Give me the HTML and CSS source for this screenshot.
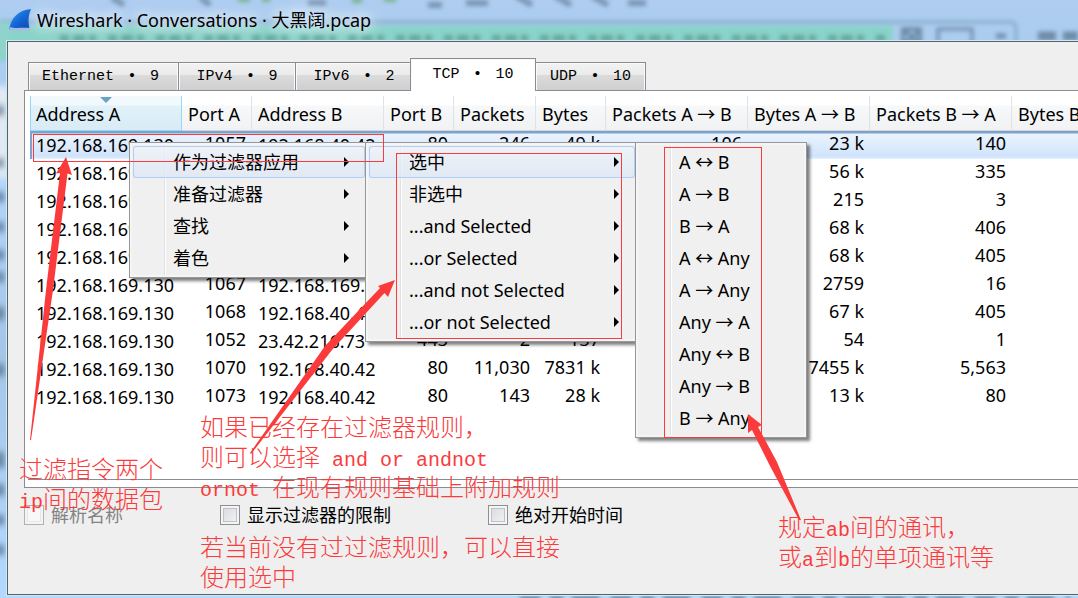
FILE: index.html
```html
<!DOCTYPE html>
<html lang="zh-CN">
<head>
<meta charset="utf-8">
<title>Wireshark · Conversations · 大黑阔.pcap</title>
<link rel="stylesheet" href="styles.css">
</head>
<body>
<svg class="backdrop" aria-hidden="true" preserveAspectRatio="none">
  <defs>
    <filter id="soft" filterUnits="userSpaceOnUse" x="-20" y="-20" width="1140" height="660"><feGaussianBlur stdDeviation="3"/></filter>
    <filter id="edge" filterUnits="userSpaceOnUse" x="-20" y="-20" width="1140" height="660"><feGaussianBlur stdDeviation="2"/></filter>
  </defs>
  <rect x="-10" y="25" width="903" height="36" fill="#8ad3ca" filter="url(#edge)"/>
  <path d="M0 22H1012Q1016 23 1016 29V44" fill="none" stroke="#86abc9" stroke-width="3" filter="url(#edge)"/>
  <g filter="url(#edge)" fill="none" stroke="#6f8ba8" stroke-width="4">
    <rect x="903" y="29" width="17" height="20"/><path d="M905 31L919 44M919 31L905 44"/>
    <rect x="938" y="29" width="34" height="24" stroke-width="3"/>
    <path d="M996 36H1006" stroke-width="5"/>
    <path d="M1038 36H1056M1063 36H1078" stroke-width="9"/>
  </g>
  <g filter="url(#edge)" stroke="#4f8d85" stroke-width="6" stroke-dasharray="9 4 12 4 7 12" fill="none" opacity=".65">
    <path d="M60 38H885"/>
  </g>
  <g filter="url(#edge)" fill="none" stroke="#586f8b" stroke-width="6" opacity=".6">
    <path d="M112 -2L124 5M200 -3L210 5M516 -4L532 5M555 -4L571 5M592 -4L608 5M466 3H488M628 3H646M308 3H326M428 5H442" />
    <path d="M238 -1H250M262 -1H270M352 0H362M384 -1H396" stroke="#5aa552"/>
  </g>
  <g filter="url(#soft)">
    <rect x="-8" y="22" width="18" height="32" fill="#8fd4ca"/>
    <rect x="-8" y="86" width="18" height="92" fill="#e1eaf2"/>
    <path d="M0 105V116M0 158V168M0 192V202M0 222V232M0 250V260M0 272V282M0 307V320M0 364V376M0 452V468M0 484V496M0 515V525M0 545V555" stroke="#607b98" stroke-width="8"/>
  </g>
  <path d="M520 599H1070" stroke="#426487" stroke-width="4" stroke-dasharray="20 10 13 9 27 12" filter="url(#edge)"/>
</svg>

<header class="titlebar">
  <svg class="fin" viewBox="0 0 24 24" aria-hidden="true">
    <defs><linearGradient id="finfill" x1="0" y1="0" x2="1" y2="1"><stop offset="0" stop-color="#3ea0f2"/><stop offset=".5" stop-color="#1268d6"/><stop offset="1" stop-color="#0a3fa8"/></linearGradient></defs>
    <path d="M1 22C3 10 10 2 23 1C20 8 20 15 22 22Z" fill="url(#finfill)"/>
    <path d="M1 22L2 19C8 21 15 19 22 20V22.500Z" fill="#a9b9e6"/>
  </svg>
  <h1 class="title">Wireshark · Conversations · 大黑阔.pcap</h1>
</header>

<main class="client">
  <nav class="tabs" role="tablist">
    <button class="tab tab-wide" role="tab"><span>Ethernet</span><span class="dot">•</span><span>9</span></button>
    <button class="tab" role="tab"><span>IPv4</span><span class="dot">•</span><span>9</span></button>
    <button class="tab" role="tab"><span>IPv6</span><span class="dot">•</span><span>2</span></button>
    <button class="tab tab-active" role="tab" aria-selected="true"><span>TCP</span><span class="dot">•</span><span>10</span></button>
    <button class="tab tab-last" role="tab"><span>UDP</span><span class="dot">•</span><span>10</span></button>
  </nav>

  <section class="pane">
    <div class="grid-view">
      <table class="conversations">
        <colgroup><col class="c-addr-a"><col class="c-port"><col class="c-addr-b"><col class="c-port"><col class="c-packets"><col class="c-port"><col class="c-dir"><col class="c-bytes"><col class="c-dir"><col class="c-bytes"></colgroup>
        <thead>
          <tr>
            <th class="sorted">Address A<svg class="sort-mark" viewBox="0 0 12 6" aria-hidden="true"><path d="M0 0H12L6 6Z" fill="#6ba3c4"/></svg></th>
            <th>Port A</th><th>Address B</th><th>Port B</th><th>Packets</th><th>Bytes</th><th>Packets A → B</th><th>Bytes A → B</th><th>Packets B → A</th><th>Bytes B → A</th>
          </tr>
        </thead>
        <tbody>
          <tr class="selected"><td class="addr">192.168.169.130</td><td>1057</td><td class="addr">192.168.40.42</td><td>80</td><td>246</td><td>49 k</td><td>106</td><td>23 k</td><td>140</td><td></td></tr>
          <tr><td class="addr">192.168.169.130</td><td></td><td class="addr"></td><td></td><td></td><td></td><td></td><td>56 k</td><td>335</td><td></td></tr>
          <tr><td class="addr">192.168.169.130</td><td></td><td class="addr"></td><td></td><td></td><td></td><td></td><td>215</td><td>3</td><td></td></tr>
          <tr><td class="addr">192.168.169.130</td><td></td><td class="addr"></td><td></td><td></td><td></td><td></td><td>68 k</td><td>406</td><td></td></tr>
          <tr><td class="addr">192.168.169.130</td><td></td><td class="addr"></td><td></td><td></td><td></td><td></td><td>68 k</td><td>405</td><td></td></tr>
          <tr><td class="addr">192.168.169.130</td><td>1067</td><td class="addr">192.168.169.</td><td></td><td></td><td></td><td></td><td>2759</td><td>16</td><td></td></tr>
          <tr><td class="addr">192.168.169.130</td><td>1068</td><td class="addr">192.168.40.42</td><td></td><td></td><td></td><td></td><td>67 k</td><td>405</td><td></td></tr>
          <tr><td class="addr">192.168.169.130</td><td>1052</td><td class="addr">23.42.216.73</td><td>443</td><td>2</td><td>137</td><td></td><td>54</td><td>1</td><td></td></tr>
          <tr><td class="addr">192.168.169.130</td><td>1070</td><td class="addr">192.168.40.42</td><td>80</td><td>11,030</td><td>7831 k</td><td></td><td>7455 k</td><td>5,563</td><td></td></tr>
          <tr><td class="addr">192.168.169.130</td><td>1073</td><td class="addr">192.168.40.42</td><td>80</td><td>143</td><td>28 k</td><td></td><td>13 k</td><td>80</td><td></td></tr>
        </tbody>
      </table>
    </div>
  </section>

  <form class="options">
    <label class="option option-off"><input type="checkbox" disabled>解析名称</label>
    <label class="option"><input type="checkbox">显示过滤器的限制</label>
    <label class="option"><input type="checkbox">绝对开始时间</label>
  </form>
</main>

<div class="menu menu-context" role="menu">
  <button class="item item-on" role="menuitem">作为过滤器应用<i class="more"></i></button>
  <button class="item" role="menuitem">准备过滤器<i class="more"></i></button>
  <button class="item" role="menuitem">查找<i class="more"></i></button>
  <button class="item" role="menuitem">着色<i class="more"></i></button>
</div>
<div class="menu menu-apply" role="menu">
  <button class="item item-on" role="menuitem">选中<i class="more"></i></button>
  <button class="item" role="menuitem">非选中<i class="more"></i></button>
  <button class="item" role="menuitem">...and Selected<i class="more"></i></button>
  <button class="item" role="menuitem">...or Selected<i class="more"></i></button>
  <button class="item" role="menuitem">...and not Selected<i class="more"></i></button>
  <button class="item" role="menuitem">...or not Selected<i class="more"></i></button>
</div>
<div class="menu menu-direction" role="menu">
  <button class="item" role="menuitem">A ↔ B</button>
  <button class="item" role="menuitem">A → B</button>
  <button class="item" role="menuitem">B → A</button>
  <button class="item" role="menuitem">A ↔ Any</button>
  <button class="item" role="menuitem">A → Any</button>
  <button class="item" role="menuitem">Any → A</button>
  <button class="item" role="menuitem">Any ↔ B</button>
  <button class="item" role="menuitem">Any → B</button>
  <button class="item" role="menuitem">B → Any</button>
</div>

<svg class="marks" aria-hidden="true">
  <g fill="none" stroke="#fb3b3b">
    <rect x="33.500" y="134.500" width="350" height="27"/>
    <rect x="396.500" y="153.500" width="225" height="185"/>
    <rect x="664.500" y="147.500" width="97" height="290"/>
  </g>
  <g fill="#fb3b3b">
    <path d="M66 157L72 175L67.500 173.500L53 290L31 440H30L46 290L60 173L56 173.500Z"/>
    <path d="M395 280L388 297L384.500 293L332 350L251 454L250 453L325 346L380 288L378 286Z"/>
    <path d="M748 414L762 425L758 427L777 462L801 520L799 520L770 466L752 430L748 433Z"/>
  </g>
</svg>

<p class="note note-ip">过滤指令两个<br><span class="latin">ip</span>间的数据包</p>
<p class="note note-rule">如果已经存在过滤器规则，<br>则可以选择<span class="latin"> and or andnot</span><br><span class="latin">ornot </span>在现有规则基础上附加规则<br><br>若当前没有过过滤规则，可以直接<br>使用选中</p>
<p class="note note-direction">规定<span class="latin">ab</span>间的通讯，<br>或<span class="latin">a</span>到<span class="latin">b</span>的单项通讯等</p>
</body>
</html>
```
FILE: styles.css
```css
* { box-sizing: border-box; }

body {
  margin: 0;
  height: 100vh;
  display: flex;
  flex-direction: column;
  position: relative;
  overflow: hidden;
  background: linear-gradient(#aecdf0 0, #a9ccef 60px, #b3d5fb 180px, #a4c5e6 350px, #b3d9ff 100%);
  color: #000;
  font: 18px/24px "Noto Sans", "Noto Sans CJK SC", sans-serif;
}

button {
  margin: 0;
  border: 0;
  background: none;
  color: inherit;
  font: inherit;
  text-align: left;
}

.backdrop,
.marks {
  position: absolute;
  top: 0;
  left: 0;
  width: 100%;
  height: 100%;
  pointer-events: none;
}

.titlebar {
  position: relative;
  display: flex;
  align-items: center;
  gap: 5px;
  height: 41px;
  padding: 0 0 1px 8px;
}

.fin { width: 24px; height: 24px; }

.title {
  margin: 0;
  font-size: 18px;
  font-weight: 400;
  line-height: 24px;
  white-space: nowrap;
  text-shadow: 0 0 8px #e6f2fb, 0 0 14px #e6f2fb, 0 0 18px #e6f2fb;
}

.client {
  position: relative;
  flex: 1;
  min-height: 0;
  display: flex;
  flex-direction: column;
  margin: 0 0 3px 7px;
  border: solid #51646e;
  border-width: 1px 0 1px 1px;
  box-shadow: 0 0 0 1px #d3e9f2;
  background: #efefef;
}

.tabs {
  display: flex;
  align-items: flex-end;
  height: 48px;
  padding-left: 20px;
}

.tab {
  display: flex;
  align-items: center;
  justify-content: center;
  gap: 9px;
  width: 118px;
  height: 28px;
  padding: 0;
  border: 1px solid #898c95;
  border-width: 1px 1px 0;
  margin-right: -1px;
  box-shadow: inset 1px 1px #fafafa, inset -1px 0 #fafafa;
  background: linear-gradient(#f2f2f2 0, #ebebeb 45%, #dbdbdb 46%, #cfcfcf 100%);
  font: 15px/24px "Liberation Mono", monospace;
}

.tab-wide { width: 151px; padding-right: 6px; }
.tab-last { width: 111px; }

.tab-active {
  z-index: 1;
  width: 126px;
  height: 33px;
  margin-bottom: -1px;
  margin-left: -2px;
  background: #fff;
}

.dot { width: 18px; text-align: center; }

.pane {
  flex: 1;
  min-height: 0;
  display: flex;
  margin-left: 16px;
  padding: 5px 0 7px 3px;
  border: solid #898c95;
  border-width: 1px 0 1px 1px;
  background: #fff;
}

.grid-view {
  flex: 1;
  min-width: 0;
  overflow: hidden;
  padding-left: 2px;
  border-bottom: 1px solid #898c95;
}

.conversations {
  width: 1104px;
  table-layout: fixed;
  border-collapse: separate;
  border-spacing: 0;
}

.c-addr-a { width: 152px; }
.c-port { width: 70px; }
.c-addr-b { width: 132px; }
.c-packets { width: 82px; }
.c-dir { width: 142px; }
.c-bytes { width: 122px; }

.conversations th {
  position: relative;
  height: 35px;
  padding: 2px 0 0 6px;
  border-right: 1px solid #dfe2e6;
  border-bottom: 1px solid #d5d5d5;
  background: linear-gradient(#fff 0, #fff 9px, #f7f8fa 10px, #f1f2f4 100%);
  font-weight: 400;
  text-align: left;
  white-space: nowrap;
}

.conversations th.sorted {
  padding-left: 5px;
  border: 1px solid #96d9f3;
  border-top: 0;
  background: linear-gradient(#f2f9fc 0, #f2f9fc 9px, #e1f1f9 10px, #d8ecf6 100%);
}

.sort-mark {
  position: absolute;
  top: 1px;
  left: 69px;
  width: 12px;
  height: 6px;
}

.conversations td {
  height: 28px;
  padding: 0 6px 4px 0;
  text-align: right;
  white-space: nowrap;
}

.conversations td.addr {
  padding: 2px 0 2px 6px;
  text-align: left;
}

.selected td {
  background: linear-gradient(#7da2ce 0, #7da2ce 2px, #ebf4fe 3px, #cfe3fc 26px, #e2efff 27px);
}

.selected td:first-child { box-shadow: inset 2px 0 #7da2ce; }

.options {
  display: grid;
  grid-template-columns: 196px 268px auto;
  align-items: center;
  padding: 15px 0 67px 16px;
}

.option {
  display: flex;
  align-items: center;
  gap: 7px;
}

.option-off { color: #838383; }

.option input {
  appearance: none;
  width: 20px;
  height: 20px;
  margin: 0;
  border: 1px solid #8e8f8f;
  outline: 1px solid #bfc3c8;
  outline-offset: -4px;
  background: linear-gradient(135deg, #d4d7dc, #f6f6f6);
  box-shadow: inset 0 0 0 2px #f4f4f4;
}

.option-off input { border-color: #b1b1b1; outline-color: #e6e6e6; background: #f8f8f8; }

.menu {
  position: absolute;
  top: 142px;
  padding: 3px;
  border: 1px solid #979797;
  background: linear-gradient(90deg, #f0f0f0 34px, #e0e0e0 34px, #e0e0e0 35px, #fff 35px, #fff 36px, #f0f0f0 36px);
  box-shadow: inset 0 0 0 2px #f5f5f5, 3px 3px 3px rgba(0, 0, 0, .5);
}

.menu-context { left: 129px; width: 240px; }
.menu-apply { left: 365px; width: 274px; }
.menu-direction { left: 635px; width: 172px; }

.item {
  position: relative;
  display: flex;
  align-items: center;
  width: 100%;
  height: 32px;
  padding: 0 16px 0 40px;
  white-space: nowrap;
}

.item-on {
  border-radius: 3px;
  background: linear-gradient(rgba(240, 243, 248, .8), rgba(220, 231, 246, .8));
  box-shadow: inset 0 0 0 1px #aecff7;
}

.more {
  margin-left: auto;
  border: solid transparent;
  border-width: 5px 0 5px 5px;
  border-left-color: #000;
}

.note {
  position: absolute;
  margin: 0;
  color: #fb3b3b;
  font: 300 24px/30px "Noto Sans CJK SC", sans-serif;
  white-space: nowrap;
}

.latin {
  font-family: "Liberation Mono", monospace;
  font-size: 20px;
  line-height: 0;
  white-space: pre;
}

.note-ip { top: 453px; left: 19px; }
.note-rule { top: 411px; left: 200px; }
.note-direction { top: 511px; left: 778px; }
```
